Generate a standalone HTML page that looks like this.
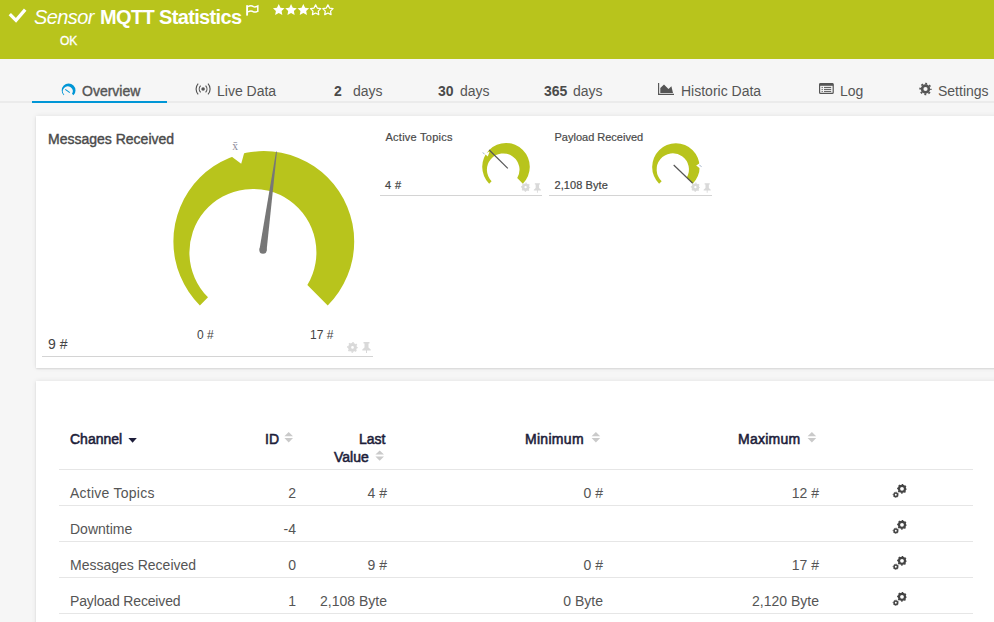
<!DOCTYPE html>
<html><head><meta charset="utf-8">
<style>
*{margin:0;padding:0;box-sizing:border-box}
html,body{width:994px;height:622px;overflow:hidden;background:#f6f6f6;font-family:"Liberation Sans",sans-serif;position:relative}
.a{position:absolute;white-space:nowrap}
#hdr{position:absolute;left:0;top:0;width:994px;height:59px;background:#b8c41c}
.tab{position:absolute;top:83px;font-size:14px;color:#555;line-height:16px;white-space:nowrap}
.tab b{color:#4a4a4a}
.card{position:absolute;background:#fff;box-shadow:0 1px 1.5px rgba(0,0,0,.09),0 0 5px rgba(0,0,0,.09)}
.th{position:absolute;font-size:14px;color:#1d1d3a;line-height:16px;white-space:nowrap;-webkit-text-stroke:0.55px #1d1d3a}
.td{position:absolute;font-size:14px;color:#555;line-height:16px;white-space:nowrap}
.r{text-align:right}
.hl{position:absolute;left:59px;width:914px;height:1px;background:#e6e6e6}
svg{position:absolute;left:0;top:0;overflow:visible}
</style></head><body>
<div id="hdr"></div>
<div class="a" style="left:34px;top:4px;font-size:20px;color:#fff;font-style:italic;line-height:26px;letter-spacing:-0.6px">Sensor</div>
<div class="a" style="left:100px;top:4px;font-size:20px;color:#fff;font-weight:bold;line-height:26px;letter-spacing:-0.65px">MQTT Statistics</div>
<div class="a" style="left:60px;top:34px;font-size:12px;color:#fff;line-height:14px;-webkit-text-stroke:0.35px #fff">OK</div>

<!-- tabs -->
<div class="a" style="left:0;top:101px;width:994px;height:2px;background:#ebebeb"></div>
<div class="a" style="left:32px;top:101px;width:135px;height:2px;background:#0096d6"></div>
<div class="tab" style="left:82px;color:#555;-webkit-text-stroke:0.4px #555">Overview</div>
<div class="tab" style="left:217px">Live Data</div>
<div class="tab" style="left:334px"><b>2</b></div><div class="tab" style="left:353px">days</div>
<div class="tab" style="left:438px"><b>30</b></div><div class="tab" style="left:460px">days</div>
<div class="tab" style="left:544px"><b>365</b></div><div class="tab" style="left:573px">days</div>
<div class="tab" style="left:681px">Historic Data</div>
<div class="tab" style="left:840px">Log</div>
<div class="tab" style="left:938px">Settings</div>

<!-- card 1 -->
<div class="card" style="left:36px;top:116px;width:1000px;height:252px"></div>
<div class="a" style="left:48px;top:131px;font-size:14px;line-height:16px;color:#4a4a4a;-webkit-text-stroke:0.4px #4a4a4a">Messages Received</div>
<div class="a" style="left:48px;top:336px;font-size:14px;color:#444;line-height:16px">9 #</div>
<div class="a" style="left:197px;top:328px;font-size:12px;color:#444;line-height:14px">0 #</div>
<div class="a" style="left:310px;top:328px;font-size:12px;color:#444;line-height:14px">17 #</div>
<div class="a" style="left:42px;top:356px;width:331px;height:1px;background:#d4d4d4"></div>

<div class="a" style="left:385.5px;top:131px;font-size:11px;line-height:13px;color:#4a4a4a;letter-spacing:0.25px;-webkit-text-stroke:0.2px #4a4a4a">Active Topics</div>
<div class="a" style="left:385px;top:179px;font-size:11px;color:#444;line-height:13px;letter-spacing:0.4px;-webkit-text-stroke:0.2px #444">4 #</div>
<div class="a" style="left:380px;top:195px;width:162px;height:1px;background:#d4d4d4"></div>
<div class="a" style="left:554.5px;top:131px;font-size:11px;line-height:13px;color:#4a4a4a;-webkit-text-stroke:0.2px #4a4a4a">Payload Received</div>
<div class="a" style="left:554.5px;top:179px;font-size:11px;color:#444;line-height:13px;letter-spacing:0.08px;-webkit-text-stroke:0.2px #444">2,108 Byte</div>
<div class="a" style="left:549px;top:195px;width:163px;height:1px;background:#d4d4d4"></div>

<!-- card 2 -->
<div class="card" style="left:36px;top:381px;width:1000px;height:300px"></div>
<div class="th" style="left:70px;top:431px">Channel</div>
<div class="th" style="left:265px;top:431px">ID</div>
<div class="th" style="left:359px;top:431px">Last</div>
<div class="th" style="left:334px;top:449px">Value</div>
<div class="th" style="left:525px;top:431px;letter-spacing:0.3px">Minimum</div>
<div class="th" style="left:738px;top:431px;letter-spacing:0.25px">Maximum</div>
<div class="hl" style="top:469px"></div>
<div class="hl" style="top:505px"></div>
<div class="hl" style="top:541px"></div>
<div class="hl" style="top:577px"></div>
<div class="hl" style="top:613px"></div>

<div class="td" style="left:70px;top:485px;letter-spacing:0.25px">Active Topics</div>
<div class="td" style="left:70px;top:521px">Downtime</div>
<div class="td" style="left:70px;top:557px">Messages Received</div>
<div class="td" style="left:70px;top:593px;letter-spacing:-0.15px">Payload Received</div>

<div class="td r" style="left:196px;width:100px;top:485px">2</div>
<div class="td r" style="left:196px;width:100px;top:521px">-4</div>
<div class="td r" style="left:196px;width:100px;top:557px">0</div>
<div class="td r" style="left:196px;width:100px;top:593px">1</div>

<div class="td r" style="left:287px;width:100px;top:485px">4 #</div>
<div class="td r" style="left:287px;width:100px;top:557px">9 #</div>
<div class="td r" style="left:287px;width:100px;top:593px">2,108 Byte</div>

<div class="td r" style="left:503px;width:100px;top:485px">0 #</div>
<div class="td r" style="left:503px;width:100px;top:557px">0 #</div>
<div class="td r" style="left:503px;width:100px;top:593px">0 Byte</div>

<div class="td r" style="left:719px;width:100px;top:485px">12 #</div>
<div class="td r" style="left:719px;width:100px;top:557px">17 #</div>
<div class="td r" style="left:719px;width:100px;top:593px">2,120 Byte</div>

<svg width="994" height="622" viewBox="0 0 994 622">
  <defs>
    <g id="star"><polygon points="0.00,-6.10 1.53,-2.10 5.80,-1.89 2.47,0.80 3.59,4.94 0.00,2.60 -3.59,4.94 -2.47,0.80 -5.80,-1.89 -1.53,-2.10"/></g>
    <g id="tgear">
      <circle cx="0" cy="0" r="3" fill="none" stroke="#444" stroke-width="2.2"/>
      <circle cx="0" cy="0" r="4.3" fill="none" stroke="#444" stroke-width="1.2" stroke-dasharray="1.5 1.877" stroke-dashoffset="0.75"/>
      <circle cx="-6.2" cy="6" r="1.75" fill="none" stroke="#444" stroke-width="1.6"/>
      <circle cx="-6.2" cy="6" r="2.7" fill="none" stroke="#444" stroke-width="0.8" stroke-dasharray="1 1.12" stroke-dashoffset="0.5"/>
    </g>
    <g id="sort"><path d="M0 4.2 L4.3 0 L8.6 4.2 Z M0 6 L4.3 10.4 L8.6 6 Z" fill="#cacaca"/></g>
    <g id="cgear">
      <circle cx="0" cy="0" r="2.9" fill="none" stroke="#d9d9d9" stroke-width="3.1"/>
      <circle cx="0" cy="0" r="4.7" fill="none" stroke="#d9d9d9" stroke-width="1.4" stroke-dasharray="1.6 2.09" stroke-dashoffset="0.8"/>
    </g>
    <g id="cpin"><path d="M1.2 0 H7.2 V1.5 H6.2 V5.5 L8.4 7.6 V8.6 H0 V7.6 L2.2 5.5 V1.5 H1.2 Z M3.7 8.6 H4.7 V11 H3.7 Z" fill="#d9d9d9"/></g>
  </defs>

  <!-- check -->
  <path d="M9.8 14.2 L16 20.4 L25.2 9.6" stroke="#fff" stroke-width="3.3" fill="none"/>
  <!-- flag -->
  <path d="M247.1 5.2 V15.6" stroke="#fff" stroke-width="1.9"/>
  <path d="M248 6.6 C250 5.4 252 5.6 253.5 6.6 C255 7.4 256.5 6.6 257.8 6 V11.2 C256.5 11.8 255 12.6 253.5 11.8 C252 10.8 250 10.8 248 11.8" stroke="#fff" stroke-width="1.5" fill="none"/>
  <!-- stars -->
  <g fill="#fff">
    <polygon transform="translate(278.75 10.1)" points="0.00,-6.10 1.76,-2.43 5.80,-1.89 2.85,0.93 3.59,4.94 0.00,3.00 -3.59,4.94 -2.85,0.93 -5.80,-1.89 -1.76,-2.43"/>
    <polygon transform="translate(291.04 10.1)" points="0.00,-6.10 1.76,-2.43 5.80,-1.89 2.85,0.93 3.59,4.94 0.00,3.00 -3.59,4.94 -2.85,0.93 -5.80,-1.89 -1.76,-2.43"/>
    <polygon transform="translate(303.33 10.1)" points="0.00,-6.10 1.76,-2.43 5.80,-1.89 2.85,0.93 3.59,4.94 0.00,3.00 -3.59,4.94 -2.85,0.93 -5.80,-1.89 -1.76,-2.43"/>
  </g>
  <g fill="none" stroke="#fff" stroke-width="1.25" stroke-linejoin="round">
    <polygon transform="translate(315.62 10.3)" points="0.00,-5.40 1.62,-2.22 5.14,-1.67 2.62,0.85 3.17,4.37 0.00,2.75 -3.17,4.37 -2.62,0.85 -5.14,-1.67 -1.62,-2.22"/>
    <polygon transform="translate(327.91 10.3)" points="0.00,-5.40 1.62,-2.22 5.14,-1.67 2.62,0.85 3.17,4.37 0.00,2.75 -3.17,4.37 -2.62,0.85 -5.14,-1.67 -1.62,-2.22"/>
  </g>

  <!-- overview icon -->
  <path d="M63.72 95.28 A6.9 6.9 0 1 1 73.48 95.28 L72.01 93.81 A4.9 4.9 0 1 0 64.29 94.71 Z" fill="#0096d6"/>
  <path d="M65.3 89.4 L69.8 92.6" stroke="#0096d6" stroke-width="1.1"/>
  <!-- live data icon -->
  <circle cx="203.1" cy="89" r="1.8" fill="#555"/>
  <path d="M200.6 85.6 A5 5 0 0 0 200.6 92.4 M205.6 85.6 A5 5 0 0 1 205.6 92.4" stroke="#555" stroke-width="1.15" fill="none"/>
  <path d="M198.2 83.6 A8 8 0 0 0 198.2 94.4 M208 83.6 A8 8 0 0 1 208 94.4" stroke="#555" stroke-width="1.15" fill="none"/>
  <!-- historic icon -->
  <path d="M658.6 83 V94.4 H674" stroke="#555" stroke-width="1.15" fill="none"/>
  <path d="M660.3 92.9 V88 L664 84.4 L668.5 89 L671.4 86.3 L673 92.9 Z" fill="#555"/>
  <!-- log icon -->
  <rect x="819.6" y="83.6" width="13.6" height="9.8" rx="1" fill="none" stroke="#555" stroke-width="1.2"/>
  <rect x="819.6" y="83.2" width="13.6" height="2.6" fill="#555"/>
  <path d="M821.6 87.4 H822.8 M824 87.4 H831.2 M821.6 89.4 H822.8 M824 89.4 H831.2 M821.6 91.4 H822.8 M824 91.4 H831.2" stroke="#555" stroke-width="1"/>
  <!-- settings gear -->
  <circle cx="925.5" cy="89" r="3.4" fill="none" stroke="#555" stroke-width="2.6"/>
  <circle cx="925.5" cy="89" r="5.3" fill="none" stroke="#555" stroke-width="1.8" stroke-dasharray="1.9 2.26" stroke-dashoffset="0.95"/>

  <!-- big gauge -->
  <path d="M199.88 305.42 A90.4 90.4 0 1 1 327.72 305.42 L307.36 285.06 A63.5 63.5 0 1 0 208.00 297.30 Z" fill="#b8c41c"/>
  <path d="M230.5 155.8 L241.2 163.8 L245 150 L238 148.5 Z" fill="#fff"/>
  <text x="232.2" y="150.2" font-size="11.5" fill="#8e8e9c" font-family="Liberation Serif">x&#772;</text>
  <path d="M266.57 250.69 L276.95 151.68 L276.06 151.56 L259.43 249.71 Z" fill="#777"/>
  <circle cx="263" cy="250.2" r="3.6" fill="#777"/>

  <!-- active topics gauge -->
  <path d="M489.17 183.63 A23.8 23.8 0 1 1 522.83 183.63 L517.22 178.02 A16.3 16.3 0 1 0 491.62 181.18 Z" fill="#b8c41c"/>
  <path d="M484.6 153.8 L487.8 156.6 L489.6 151.6 Z" fill="#fff"/>
  <path d="M482.6 152.6 L484.6 154" stroke="#a8b8cc" stroke-width="1"/>
  <path d="M507.8 168.4 L489.2 150" stroke="#555" stroke-width="1.2"/>

  <!-- payload gauge -->
  <path d="M659.11 183.79 A23.75 23.75 0 1 1 692.69 183.79 L686.67 177.77 A16.15 16.15 0 1 0 661.68 181.22 Z" fill="#b8c41c"/>
  <path d="M700 163 L696.2 165.6 L700 168.4 Z" fill="#fff"/>
  <path d="M699.4 165.2 L701.6 166.6" stroke="#a8b8cc" stroke-width="1"/>
  <path d="M673.7 165 L692.7 183.2" stroke="#555" stroke-width="1.2"/>

  <!-- card gear/pin -->
  <use href="#cgear" x="352.5" y="347.4"/>
  <use href="#cpin" x="362.3" y="342"/>
  <use href="#cgear" x="525.6" y="187.2" transform="translate(525.6 187.2) scale(0.85) translate(-525.6 -187.2)"/>
  <use href="#cpin" x="533.8" y="183.3" transform="translate(533.8 183.3) scale(0.85) translate(-533.8 -183.3)"/>
  <use href="#cgear" x="695.4" y="187.2" transform="translate(695.4 187.2) scale(0.85) translate(-695.4 -187.2)"/>
  <use href="#cpin" x="703.6" y="183.3" transform="translate(703.6 183.3) scale(0.85) translate(-703.6 -183.3)"/>

  <!-- table header icons -->
  <path d="M128.4 438 H136.8 L132.6 442.7 Z" fill="#1d1d3a"/>
  <use href="#sort" x="284.4" y="432"/>
  <use href="#sort" x="375.4" y="450.4"/>
  <use href="#sort" x="591.6" y="432"/>
  <use href="#sort" x="807.6" y="432"/>

  <!-- row gears -->
  <use href="#tgear" x="902" y="488.8"/>
  <use href="#tgear" x="902" y="524.8"/>
  <use href="#tgear" x="902" y="560.8"/>
  <use href="#tgear" x="902" y="596.8"/>
</svg>
</body></html>
